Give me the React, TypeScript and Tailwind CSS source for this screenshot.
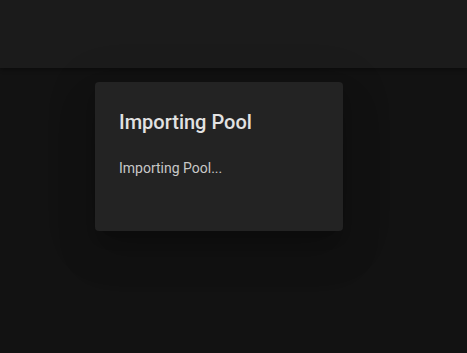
export default function App() {
  return (
    <div className="w-[467px] h-[353px] bg-[#121212] overflow-hidden" style={{ fontFamily: 'Roboto, "Liberation Sans", sans-serif' }}>
      <div className="h-[68px] bg-[#1b1b1b] shadow-[0_2px_4px_rgba(0,0,0,0.3)]" />
      <div className="pt-[14px] pl-[95px]">
        <div className="w-[248px] h-[149px] rounded-[4px] bg-[#232323] shadow-[0_11px_15px_-7px_rgba(0,0,0,0.2),0_24px_38px_3px_rgba(0,0,0,0.12),0_9px_46px_8px_rgba(0,0,0,0.1)] pt-[24px] px-[24px]">
          <div className="text-[20px] leading-[32px] font-medium text-[#e2e2e2]">Importing Pool</div>
          <div className="mt-[20px] text-[14px] leading-[21px] text-[#c8c8c8]">Importing Pool...</div>
        </div>
      </div>
    </div>
  );
}
